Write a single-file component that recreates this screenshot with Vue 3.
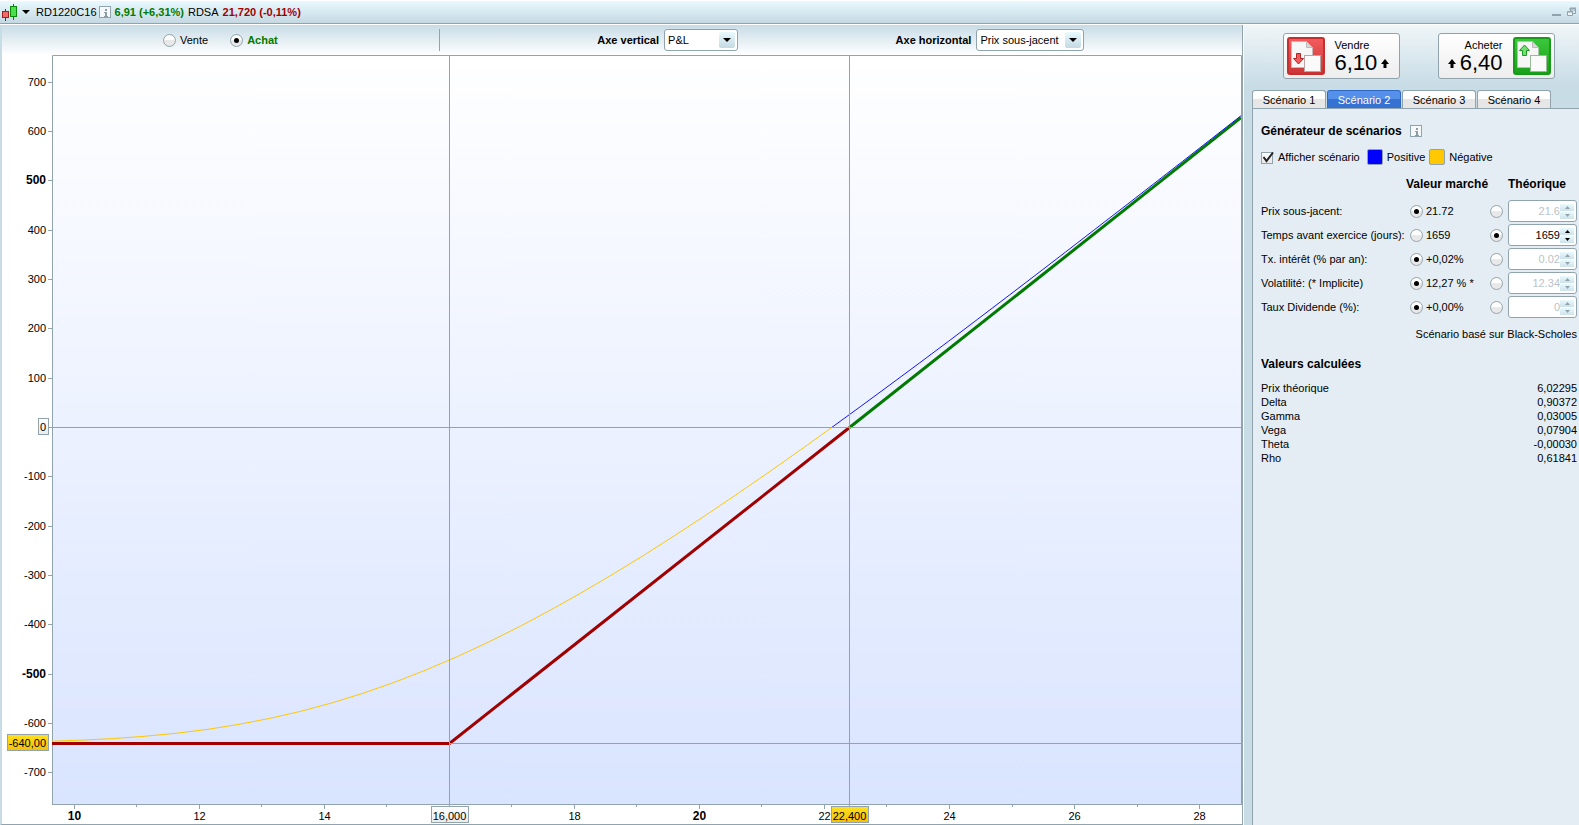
<script setup>
import { ref, computed, onMounted, onBeforeUnmount } from 'vue'

const side = ref('achat')
const verticalAxis = ref('P&L')
const horizontalAxis = ref('Prix sous-jacent')
const tabs = ['Scénario 1', 'Scénario 2', 'Scénario 3', 'Scénario 4']
const activeTab = ref(1)
const showScenario = ref(true)

const params = ref([
  { id: 'spot', label: 'Prix sous-jacent:', market: '21.72', theory: '21.6', source: 'market' },
  { id: 'days', label: 'Temps avant exercice (jours):', market: '1659', theory: '1659', source: 'theory' },
  { id: 'rate', label: 'Tx. intérêt (% par an):', market: '+0,02%', theory: '0.02', source: 'market' },
  { id: 'vol', label: 'Volatilité: (* Implicite)', market: '12,27 % *', theory: '12.34', source: 'market' },
  { id: 'div', label: 'Taux Dividende (%):', market: '+0,00%', theory: '0', source: 'market' }
])

const results = [
  ['Prix théorique', '6,02295'],
  ['Delta', '0,90372'],
  ['Gamma', '0,03005'],
  ['Vega', '0,07904'],
  ['Theta', '-0,00030'],
  ['Rho', '0,61841']
]

// Chart geometry
const host = ref(null)
const size = ref({ w: 1240, h: 769 })
let observer
function measure() {
  const r = host.value.getBoundingClientRect()
  size.value = { w: Math.round(r.width), h: Math.round(r.height) }
}
onMounted(() => {
  measure()
  observer = new ResizeObserver(measure)
  observer.observe(host.value)
})
onBeforeUnmount(() => observer.disconnect())

const left = 50
const bottomAxis = 20
const range = { x0: 9.655, x1: 28.67, y0: -764, y1: 754 }
const right = computed(() => size.value.w - 1)
const bottom = computed(() => size.value.h - bottomAxis)
const sx = v => left + ((v - range.x0) / (range.x1 - range.x0)) * (right.value - left)
const sy = v => ((range.y1 - v) / (range.y1 - range.y0)) * bottom.value
const px = v => Math.round(sx(v)) + 0.5
const py = v => Math.round(sy(v)) + 0.5

const yTicks = [700, 600, 500, 400, 300, 200, 100, -100, -200, -300, -400, -500, -600, -700]
const xTicks = Array.from({ length: 19 }, (_, i) => i + 10).filter(v => v !== 16)

// Black-Scholes call value
const strike = 16
const premium = 6.4
function cdf(x) {
  const t = 1 / (1 + 0.2316419 * Math.abs(x))
  const d = 0.3989423 * Math.exp((-x * x) / 2)
  const p = d * t * (0.3193815 + t * (-0.3565638 + t * (1.781478 + t * (-1.821256 + t * 1.330274))))
  return x > 0 ? 1 - p : p
}
function profit(s) {
  const years = 1659 / 365
  const sd = 0.1227 * Math.sqrt(years)
  const k = strike * Math.exp(-0.0002 * years)
  const d1 = Math.log(s / k) / sd + sd / 2
  return (s * cdf(d1) - k * cdf(d1 - sd) - premium) * 100
}
const zeroCross = 22.12
function curve(from, to) {
  const pts = []
  const n = Math.ceil((to - from) * 2)
  for (let i = 0; i <= n; i++) {
    const s = from + ((to - from) * i) / n
    pts.push(`${sx(s).toFixed(1)},${sy(profit(s)).toFixed(1)}`)
  }
  return pts.join(' ')
}
</script>

<template>
  <div class="app">
    <header class="titlebar">
      <svg class="candles" width="16" height="18" viewBox="0 0 16 18" aria-hidden="true">
        <path d="M3.500 6v12" stroke="#8a1a1a" />
        <rect x="0.500" y="8.500" width="6" height="6" fill="#f06a6a" stroke="#a02020" />
        <path d="M11.500 1v16" stroke="#0a7a0a" />
        <rect x="8.500" y="3.500" width="6" height="10" fill="#4be04b" stroke="#0a8a0a" />
      </svg>
      <svg class="caret" width="8" height="4" viewBox="0 0 8 4" aria-hidden="true"><path d="M0 0h8L4 4z" /></svg>
      <span class="name">RD1220C16</span>
      <button class="info" type="button" aria-label="Information">
        <svg width="12" height="12" viewBox="0 0 12 12"><path d="M5 2h2v2H5zM4 5h3v4h1v1H4V9h1V6H4z" fill="#8b9aa3" /></svg>
      </button>
      <b class="up">6,91 (+6,31%)</b>
      <span class="ref">RDSA</span>
      <b class="down">21,720 (-0,11%)</b>
      <div class="window-buttons">
        <button type="button" aria-label="Réduire"><svg width="9" height="12" viewBox="0 0 9 12"><path d="M0 8h9v2H0z" fill="#91a4ae" /></svg></button>
        <button type="button" aria-label="Restaurer"><svg width="9" height="12" viewBox="0 0 9 12"><path d="M3.500 5V2.500h5v5H6M3 2h6v2H3z" fill="none" stroke="#91a4ae" /><path d="M.5 5.500h5v4h-5zM.5 6h5" fill="#eef4f7" stroke="#91a4ae" /></svg></button>
      </div>
    </header>

    <div class="body">
      <main class="left">
        <div class="toolbar">
          <div class="sides">
            <label><input v-model="side" type="radio" name="side" value="vente" />Vente</label>
            <label class="buy"><input v-model="side" type="radio" name="side" value="achat" />Achat</label>
          </div>
          <div class="axes">
            <label class="axis">Axe vertical
              <span class="combo combo-short">
                <select v-model="verticalAxis"><option>P&amp;L</option></select>
                <i><svg width="8" height="4" viewBox="0 0 8 4"><path d="M0 0h8L4 4z" /></svg></i>
              </span>
            </label>
            <label class="axis">Axe horizontal
              <span class="combo combo-long">
                <select v-model="horizontalAxis"><option>Prix sous-jacent</option></select>
                <i><svg width="8" height="4" viewBox="0 0 8 4"><path d="M0 0h8L4 4z" /></svg></i>
              </span>
            </label>
          </div>
        </div>

        <div ref="host" class="chart">
          <svg :viewBox="`0 0 ${size.w} ${size.h}`" role="img" aria-label="P&amp;L selon le prix sous-jacent">
            <defs>
              <linearGradient id="bg" x1="0" y1="0" x2="0" y2="1">
                <stop offset="0" stop-color="#ffffff" />
                <stop offset="1" stop-color="#d9e4ff" />
              </linearGradient>
              <linearGradient id="gold" x1="0" y1="0" x2="0" y2="1">
                <stop offset="0" stop-color="#ffe01e" />
                <stop offset="1" stop-color="#f5bf0a" />
              </linearGradient>
              <linearGradient id="plain" x1="0" y1="0" x2="0" y2="1">
                <stop offset="0" stop-color="#ffffff" />
                <stop offset="1" stop-color="#ebebeb" />
              </linearGradient>
              <clipPath id="plot"><rect :x="left" y="0" :width="right - left" :height="bottom" /></clipPath>
            </defs>
            <rect :x="left" y="0" :width="right - left" :height="bottom" fill="url(#bg)" />

            <g class="rule">
              <path :d="`M${left + 0.5} ${bottom + 0.5}V0.5H${right + 0.5}V${bottom}`" />
              <path :d="`M${left} ${bottom + 0.5}H${size.w}`" />
              <path v-for="v in yTicks" :key="v" :d="`M${left - 4} ${py(v)}H${left}`" />
              <path v-for="v in xTicks" :key="v" :d="`M${px(v)} ${bottom + 1}v${v % 2 ? 2 : 4}`" />
            </g>

            <g clip-path="url(#plot)" fill="none">
              <path :d="`M${sx(range.x0)} ${py(-640)}H${px(16)}L${px(22.4)} ${py(0)}`" stroke="#a00000" stroke-width="3" />
              <path :d="`M${px(22.4)} ${py(0)}L${sx(range.x1)} ${sy(627)}`" stroke="#007a00" stroke-width="3" />
              <polyline :points="curve(range.x0, zeroCross)" stroke="#ffc800" />
              <polyline :points="curve(zeroCross, range.x1)" stroke="#1414ff" />
            </g>

            <g class="rule">
              <path :d="`M${left - 4} ${py(0)}H${right}`" />
              <path :d="`M${px(16)} ${py(-640)}H${right}`" />
              <path :d="`M${px(16)} 0V${bottom + 3}`" />
              <path :d="`M${px(22.4)} 0V${bottom + 3}`" />
            </g>

            <g class="ylabels">
              <text v-for="v in yTicks" :key="v" :x="left - 6" :y="py(v) + 3" :class="{ major: v % 500 === 0 }">{{ v }}</text>
              <rect :x="left - 13.5" :y="py(0) - 9" width="10" height="16" fill="url(#plain)" stroke="#91a4ae" />
              <text :x="left - 6" :y="py(0) + 3">0</text>
              <rect :x="left - 44.5" :y="py(-640) - 9" width="41" height="16" fill="url(#gold)" stroke="#91a4ae" />
              <text :x="left - 6" :y="py(-640) + 3">-640,00</text>
            </g>
            <g class="xlabels">
              <template v-for="v in xTicks" :key="v">
                <text v-if="v % 2 === 0" :x="px(v)" :y="bottom + 16" :class="{ major: v % 10 === 0 }">{{ v }}</text>
              </template>
              <rect :x="px(16) - 18" :y="bottom + 2.5" width="37" height="16" fill="url(#plain)" stroke="#91a4ae" />
              <text :x="px(16)" :y="bottom + 16">16,000</text>
              <rect :x="px(22.4) - 18" :y="bottom + 2.5" width="37" height="16" fill="url(#gold)" stroke="#91a4ae" />
              <text :x="px(22.4)" :y="bottom + 16">22,400</text>
            </g>
          </svg>
        </div>
      </main>

      <aside class="right">
        <div class="orders">
          <button class="order" type="button">
            <svg width="38" height="38" viewBox="0 0 38 38" aria-hidden="true">
              <defs><linearGradient id="red" x1="0" y1="0" x2="0" y2="1"><stop offset="0" stop-color="#f25c5c" /><stop offset="1" stop-color="#cc3535" /></linearGradient></defs>
              <rect x="1" y="1" width="36" height="36" rx="2" fill="url(#red)" stroke="#c43030" stroke-width="2" />
              <path d="M4.500 4.500h15l6 6v20h-21z" fill="#f6f6f6" stroke="#c9b5b5" />
              <path d="M19.500 4.500v6h6z" fill="#d8d8d8" stroke="#bbb" />
              <path d="M9.500 16.500h4v5h3l-5 5.500-5-5.500h3z" fill="#ee5a5a" stroke="#b52222" />
              <rect x="17.500" y="18.500" width="16" height="16" fill="#fafafa" stroke="#b9a5a5" />
            </svg>
            <span class="quote">
              <span>Vendre</span>
              <span class="price">6,10<svg width="8" height="9" viewBox="0 0 8 9"><path d="M4 0L8 5H5.500v4h-3V5H0z" /></svg></span>
            </span>
          </button>
          <button class="order order-buy" type="button">
            <span class="quote">
              <span>Acheter</span>
              <span class="price"><svg width="8" height="9" viewBox="0 0 8 9"><path d="M4 0L8 5H5.500v4h-3V5H0z" /></svg>6,40</span>
            </span>
            <svg width="38" height="38" viewBox="0 0 38 38" aria-hidden="true">
              <defs><linearGradient id="green" x1="0" y1="0" x2="0" y2="1"><stop offset="0" stop-color="#3cc83c" /><stop offset="1" stop-color="#18a018" /></linearGradient></defs>
              <rect x="1" y="1" width="36" height="36" rx="2" fill="url(#green)" stroke="#1a9a1a" stroke-width="2" />
              <path d="M4.500 4.500h15l6 6v20h-21z" fill="#f6f6f6" stroke="#a9c9a9" />
              <path d="M19.500 4.500v6h6z" fill="#d8d8d8" stroke="#bbb" />
              <path d="M9.500 18.500h4v-5h3l-5-5.500-5 5.500h3z" fill="#6fe06f" stroke="#1f9a1f" />
              <rect x="17.500" y="18.500" width="16" height="16" fill="#fafafa" stroke="#99b999" />
            </svg>
          </button>
        </div>

        <div class="tabs" role="tablist">
          <button v-for="(t, i) in tabs" :key="t" type="button" role="tab" :aria-selected="i === activeTab" :class="['tab', { active: i === activeTab }]" @click="activeTab = i">{{ t }}</button>
        </div>

        <section class="panel">
          <h2 class="heading">Générateur de scénarios
            <button class="info" type="button" aria-label="Aide">
              <svg width="12" height="12" viewBox="0 0 12 12"><path d="M5 2h2v2H5zM4 5h3v4h1v1H4V9h1V6H4z" fill="#8b9aa3" /></svg>
            </button>
          </h2>
          <div class="legend">
            <label class="check">
              <span class="box"><input v-model="showScenario" type="checkbox" /><svg v-if="showScenario" width="13" height="13" viewBox="0 0 13 13"><path d="M2.500 6l3 4L12 1.500" fill="none" stroke="#222" stroke-width="2" /></svg></span>Afficher scénario
            </label>
            <button class="swatch positive" type="button" aria-label="Couleur positive"></button><span>Positive</span>
            <button class="swatch negative" type="button" aria-label="Couleur négative"></button><span>Négative</span>
          </div>

          <table class="params">
            <thead>
              <tr><td class="caption"></td><th>Valeur marché</th><th class="theory" colspan="2">Théorique</th></tr>
            </thead>
            <tbody>
              <tr v-for="p in params" :key="p.id">
                <td>{{ p.label }}</td>
                <td><label class="option"><input v-model="p.source" type="radio" :name="p.id" value="market" />{{ p.market }}</label></td>
                <td class="pick"><input v-model="p.source" type="radio" :name="p.id" value="theory" :aria-label="p.label + ' théorique'" /></td>
                <td class="field">
                  <span :class="['spin', { off: p.source !== 'theory' }]">
                    <input v-model="p.theory" type="text" :disabled="p.source !== 'theory'" :aria-label="p.label" />
                    <span class="arrows">
                      <button type="button" aria-label="Augmenter"><svg width="5" height="3" viewBox="0 0 5 3"><path d="M2.500 0L5 3H0z" /></svg></button>
                      <button type="button" aria-label="Diminuer"><svg width="5" height="3" viewBox="0 0 5 3"><path d="M0 0h5L2.500 3z" /></svg></button>
                    </span>
                  </span>
                </td>
              </tr>
            </tbody>
          </table>
          <p class="note">Scénario basé sur Black-Scholes</p>

          <h2 class="heading">Valeurs calculées</h2>
          <table class="results">
            <tbody>
              <tr v-for="r in results" :key="r[0]"><th>{{ r[0] }}</th><td>{{ r[1] }}</td></tr>
            </tbody>
          </table>
        </section>
      </aside>
    </div>
  </div>
</template>

<style>
body { margin: 0; background: #c8dce6; }
</style>

<style scoped>
.app {
  display: flex;
  flex-direction: column;
  min-height: 100vh;
  font: 11px/14px "Liberation Sans", Arial, sans-serif;
  color: #000;
}
.app *, .app *::before { box-sizing: border-box; }
button, input, select { font: inherit; color: inherit; margin: 0; }
button { padding: 0; border: 0; background: none; }
svg { display: block; flex: none; }
input[type="radio"] {
  appearance: none;
  display: grid;
  place-items: center;
  flex: none;
  width: 13px;
  height: 13px;
  border: 1px solid #91a4ae;
  border-radius: 50%;
  background: linear-gradient(#fff 50%, #e8e8e8 50%);
}
input[type="radio"]:checked::before {
  content: "";
  width: 5px;
  height: 5px;
  border-radius: 50%;
  background: #000;
}

.titlebar {
  display: flex;
  align-items: center;
  height: 24px;
  padding: 0 3px 0 2px;
  border-top: 1px solid #fff;
  border-bottom: 1px solid #91a4ae;
  background: linear-gradient(#e8fafe, #c5d9e3);
}
.caret { margin: 0 6px 0 4px; }
.info {
  display: inline-grid;
  place-items: center;
  width: 12px;
  height: 12px;
  border: 1px solid #91a4ae;
  background: #f6f9fa;
}
.name { margin-right: 2px; }
.up { color: #007a00; margin: 0 4px; }
.down { color: #a00000; margin-left: 4px; }
.window-buttons { display: flex; gap: 6px; margin-left: auto; }

.body { display: flex; flex: 1; border-top: 1px solid #fff; }
.left {
  display: flex;
  flex-direction: column;
  flex: 1;
  min-width: 0;
  border-left: 2px solid #c8dce6;
  border-right: 1px solid #91a4ae;
  border-bottom: 1px solid #91a4ae;
  background: #fff;
}
.toolbar {
  display: flex;
  align-items: center;
  height: 30px;
  background: linear-gradient(#c8dce6, #fff);
}
.sides {
  display: flex;
  justify-content: center;
  align-items: center;
  gap: 22px;
  width: 35.3%;
  height: 22px;
  border-right: 1px solid #91a4ae;
}
.sides label, .option { display: flex; align-items: center; gap: 4px; }
.buy { font-weight: bold; color: #007a00; }
.axes { display: flex; flex: 1; justify-content: space-evenly; }
.axis { display: flex; align-items: center; gap: 5px; font-weight: bold; }
.combo {
  display: flex;
  align-items: center;
  height: 22px;
  border: 1px solid #91a4ae;
  border-radius: 3px;
  background: #fff;
  font-weight: normal;
}
.combo-short { width: 74px; }
.combo-long { width: 108px; }
.combo select {
  flex: 1;
  min-width: 0;
  height: 18px;
  padding: 0 0 0 3px;
  border: 0;
  background: none;
  appearance: none;
}
.combo i {
  display: grid;
  place-items: center;
  width: 16px;
  height: 16px;
  margin-right: 2px;
  border-radius: 2px;
  background: linear-gradient(#e8fafe, #c5d9e3);
  pointer-events: none;
}
.chart { flex: 1; min-height: 300px; position: relative; }
.chart svg { position: absolute; inset: 0; width: 100%; height: 100%; }
.rule path { fill: none; stroke: #91a4ae; }
.ylabels text { text-anchor: end; }
.xlabels text { text-anchor: middle; }
.major { font-size: 12px; font-weight: bold; }

.right {
  display: flex;
  flex-direction: column;
  width: 336px;
  border-left: 1px solid #fff;
  padding-left: 8px;
  background: linear-gradient(#f0f6f8, #c8dce6 60px);
}
.orders { display: flex; justify-content: center; gap: 38px; padding: 8px 0 11px 6px; }
.order {
  display: flex;
  align-items: center;
  gap: 10px;
  width: 117px;
  height: 46px;
  padding: 0 3px;
  border: 1px solid #91a4ae;
  border-radius: 3px;
  background: linear-gradient(#fff, #ededed);
}
.order-buy { justify-content: flex-end; }
.quote { display: flex; flex-direction: column; text-align: left; }
.order-buy .quote { text-align: right; }
.price { display: flex; align-items: center; gap: 4px; font-size: 22px; line-height: 22px; }
.tabs { display: flex; gap: 1px; height: 18px; }
.tab {
  width: 74px;
  border: 1px solid #91a4ae;
  border-bottom: 0;
  border-radius: 3px 3px 0 0;
  background: linear-gradient(#fff 50%, #e6e6e6 50%);
}
.tab.active { border-color: #2f68c4; color: #fff; background: linear-gradient(#5591ea 50%, #3672d2 50%); }
.panel {
  flex: 1;
  padding: 14px 2px 14px 8px;
  border: solid #91a4ae;
  border-width: 1px 0 0 1px;
  background: #e4edf3;
}
.heading { display: flex; align-items: center; gap: 8px; height: 16px; margin: 0; font-size: 12px; }
.legend { display: flex; align-items: center; gap: 4px; margin: 10px 0 12px; }
.check { display: flex; align-items: center; gap: 4px; margin-right: 3px; }
.box { display: grid; }
.box > * { grid-area: 1 / 1; }
.box input { appearance: none; align-self: end; width: 12px; height: 12px; border: 1px solid #91a4ae; background: linear-gradient(#fff, #e8e8e8); }
.box svg { pointer-events: none; }
.swatch { width: 16px; height: 16px; border: 1px solid #91a4ae; border-radius: 2px; }
.positive { background: #00f; }
.negative { background: #ffc800; }

.params { width: 100%; border-collapse: collapse; }
.params td, .params th { padding: 0; height: 24px; text-align: left; white-space: nowrap; }
.params th { font-size: 12px; }
.params thead td, .params thead th { height: 22px; }
.params thead tr { vertical-align: top; }
.params .caption { width: 145px; }
.params .option { padding-left: 4px; gap: 3px; }
.params .theory { padding-left: 18px; }
.params .pick { width: 18px; }
.params .field { width: 69px; }
.spin { display: flex; align-items: center; height: 22px; padding: 0 2px; border: 1px solid #91a4ae; border-radius: 3px; background: #fff; }
.spin input { flex: 1; width: 0; padding: 0; border: 0; background: none; text-align: right; outline: 0; }
.arrows { display: grid; gap: 1px; }
.arrows button { display: grid; place-items: center; width: 14px; height: 7px; background: linear-gradient(#e8fafe, #cfe2ea); }
.off input, .off svg { color: #b9c3c9; fill: #91a4ae; }
.note { margin: 8px 0 15px; text-align: right; }
.results { width: 100%; margin-top: 9px; border-collapse: collapse; }
.results th { padding: 0; font-weight: normal; text-align: left; }
.results td { padding: 0; text-align: right; }
</style>
